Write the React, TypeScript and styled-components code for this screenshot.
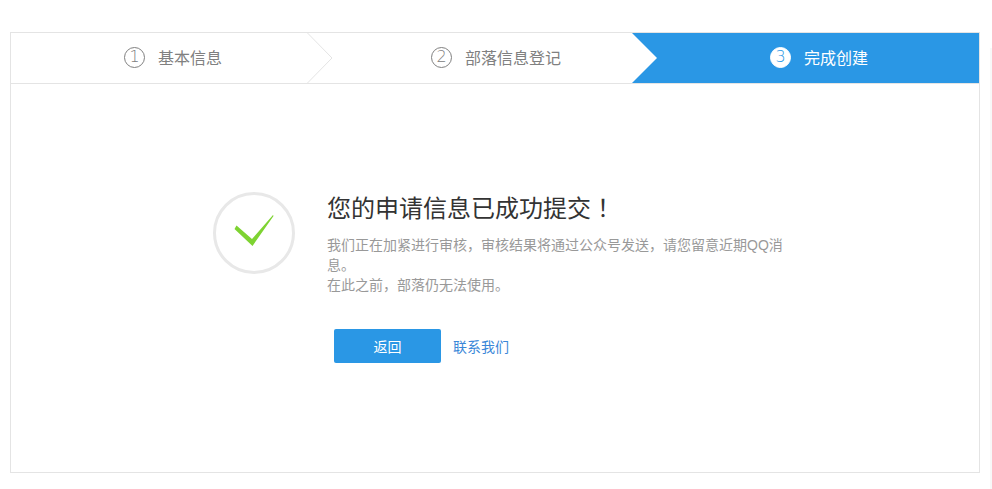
import React, { FC } from 'react';
import styled, { createGlobalStyle } from 'styled-components';

const GlobalStyle = createGlobalStyle`
  html, body {
    margin: 0;
    padding: 0;
    height: 100%;
    background: #fff;
    overflow: hidden;
  }
  body {
    font-family: "Liberation Sans", "Noto Sans CJK SC", sans-serif;
  }
`;

const Page = styled.div`
  padding: 32px 12px 0 10px;
`;

const Card = styled.div`
  height: 441px;
  box-sizing: border-box;
  border: 1px solid #e4e4e4;
`;

const Steps = styled.div`
  display: grid;
  grid-template-columns: 322px 324px 322px;
  height: 51px;
  box-sizing: border-box;
  border-bottom: 1px solid #e4e4e4;
`;

const Step = styled.div<{ $active?: boolean }>`
  position: relative;
  display: flex;
  align-items: center;
  justify-content: center;
  height: 50px;
  padding: 0 0 2px 2px;
  box-sizing: border-box;
  font-size: 16px;
  color: ${(p) => (p.$active ? '#fff' : '#808080')};

  ${(p) =>
    p.$active &&
    `
    &::before {
      content: '';
      position: absolute;
      top: 0;
      bottom: 0;
      left: -25px;
      right: 0;
      background: #2a97e5;
      clip-path: polygon(0 0, 100% 0, 100% 100%, 0 100%, 25px 50%);
    }
  `}
`;

const StepInner = styled.div`
  position: relative;
  display: flex;
  align-items: center;
`;

const StepNumber = styled.span<{ $active?: boolean }>`
  width: 21px;
  height: 21px;
  box-sizing: border-box;
  margin-right: 13px;
  border-radius: 50%;
  border: 1px solid ${(p) => (p.$active ? '#fff' : '#808080')};
  background: ${(p) => (p.$active ? '#fff' : 'transparent')};
  color: ${(p) => (p.$active ? '#2a97e5' : '#808080')};
  display: flex;
  align-items: center;
  justify-content: center;
  font-family: "DejaVu Sans", sans-serif;
  font-size: 16px;
  font-weight: 200;
  line-height: 1;
`;

const Chevron = styled.svg`
  position: absolute;
  top: 0;
  right: 0;
`;

const Body = styled.div`
  display: flex;
  align-items: flex-start;
  padding: 108px 0 0 202px;
`;

const CheckCircle = styled.div`
  width: 82px;
  height: 82px;
  box-sizing: border-box;
  border: 3px solid #e8e8e8;
  border-radius: 50%;
  display: flex;
  align-items: center;
  justify-content: center;
  flex-shrink: 0;
`;

const Content = styled.div`
  margin-left: 32px;
  padding-top: 1px;
  width: 462px;
`;

const Title = styled.h1`
  margin: 0;
  font-size: 24px;
  line-height: 32px;
  font-weight: normal;
  color: #333;
`;

const Desc = styled.p`
  margin: 10px 0 0;
  font-size: 14px;
  line-height: 20px;
  color: #999;
`;

// centred full-width punctuation, as in the reference
const Punct = styled.span`
  font-family: "Noto Sans CJK KR", sans-serif;
  line-height: 0;
`;

const Actions = styled.div`
  display: flex;
  align-items: center;
  margin: 34px 0 0 7px;
`;

const BackButton = styled.button`
  width: 107px;
  height: 34px;
  padding: 0;
  border: 0;
  border-radius: 2px;
  background: #2a97e5;
  color: #fff;
  font-family: inherit;
  font-size: 14px;
`;

const ContactLink = styled.a`
  margin-left: 12px;
  font-size: 14px;
  color: #3a87d8;
  text-decoration: none;
`;

const Edge = styled.div`
  position: fixed;
  top: 48px;
  right: 0;
  bottom: 0;
  width: 2px;
  background: #f8f8f8;
`;

const steps = [
  { num: '1', label: '基本信息' },
  { num: '2', label: '部落信息登记' },
  { num: '3', label: '完成创建', active: true },
];

const App: FC = () => (
  <>
    <GlobalStyle />
    <Edge />
    <Page>
      <Card>
        <Steps>
          {steps.map((s, i) => (
            <Step key={s.num} $active={s.active}>
              <StepInner>
                <StepNumber $active={s.active}>{s.num}</StepNumber>
                {s.label}
              </StepInner>
              {i === 0 && (
                <Chevron width="26" height="50" viewBox="0 0 26 50">
                  <path d="M0.5 0 L25 25 L0.5 50" fill="none" stroke="#e4e4e4" strokeWidth="1" />
                </Chevron>
              )}
            </Step>
          ))}
        </Steps>
        <Body>
          <CheckCircle>
            <svg width="42" height="36" viewBox="0 0 42 36">
              <path d="M3.5 10.5 L19 24 L40 0 L40.5 1 L19.5 31 L1.5 14 Z" fill="#7ed332" />
            </svg>
          </CheckCircle>
          <Content>
            <Title>
              您的申请信息已成功提交<Punct>！</Punct>
            </Title>
            <Desc>
              我们正在加紧进行审核<Punct>，</Punct>审核结果将通过公众号发送<Punct>，</Punct>请您留意近期QQ消
              <br />
              息。
              <br />
              在此之前<Punct>，</Punct>部落仍无法使用。
            </Desc>
            <Actions>
              <BackButton>返回</BackButton>
              <ContactLink href="#">联系我们</ContactLink>
            </Actions>
          </Content>
        </Body>
      </Card>
    </Page>
  </>
);

export default App;
